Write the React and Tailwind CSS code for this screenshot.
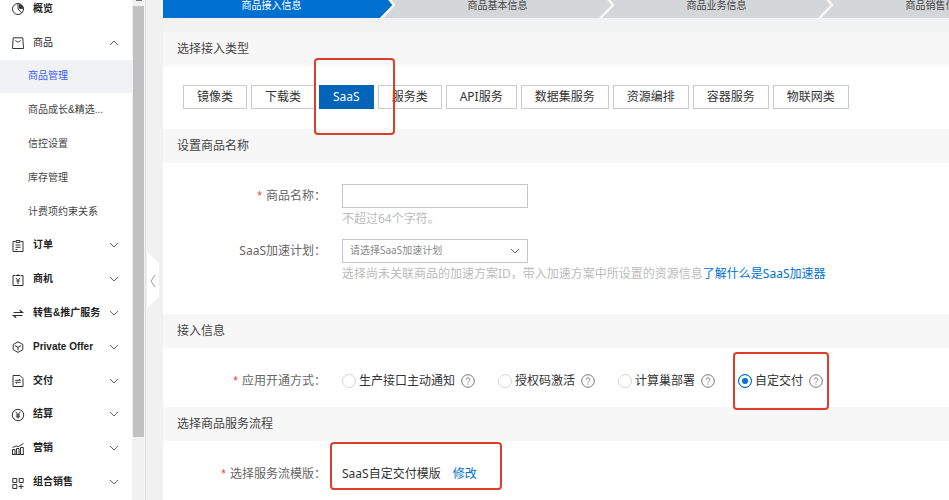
import { useState } from "react";

const iconPaths = {
  overview: (
    <>
      <circle cx="7" cy="7" r="5.5" />
      <path d="M7 1.5V7l4 3.8" />
      <path d="M8.5 2.5v3.8h3.6a5 5 0 0 0-3.6-3.8z" fill="currentColor" />
    </>
  ),
  goods: (
    <>
      <path d="M2.2 1.8h9.6l.7 10.7h-11z" />
      <path d="M4.6 4.2c.6 2.4 4.2 2.4 4.8 0" />
    </>
  ),
  order: (
    <>
      <path d="M4.5 2.5H2v10h10v-10H9.5" />
      <path d="M5 1.5h4v2H5zM4.5 6h5M4.5 8.3h5M4.5 10.5h2" />
    </>
  ),
  chance: (
    <>
      <path d="M4.5 2.5H2v10h10v-10H9.5M5 2.5h4M7 1v1.5" />
      <path d="M5 5l2 2.5L9 5M7 7.5V11M5.3 8h3.4" />
    </>
  ),
  resale: (
    <>
      <path d="M2.5 5.5h9L8.8 3.2" strokeWidth="1.2" />
      <path d="M11.5 8.5h-9l2.700 2.300" strokeWidth="1.2" />
    </>
  ),
  offer: (
    <>
      <path d="M7 1.8l4.8 2.700v5.200L7 12.400 2.200 9.700V4.500z" />
      <path d="M4 5.600L7 7.300l3-1.700M7 7.300v3" />
    </>
  ),
  delivery: (
    <>
      <path d="M2 1.5h7l3 3v8H2z" />
      <path d="M4.3 6.3h5.2L8 5M9.7 8.3H4.5L6 9.6" />
    </>
  ),
  settle: (
    <>
      <circle cx="7" cy="7" r="5.7" />
      <path d="M4.7 3.8L7 6.7l2.3-2.9M7 6.7v4M4.9 7h4.2M4.9 8.8h4.2" />
    </>
  ),
  marketing: (
    <>
      <path d="M1.5 7.5h2.500v5H1.5zM5.500 6.500H8v6H5.500zM9.500 5.500h2.800v7H9.500z" />
      <path d="M1 12.5h12M1.5 5.5L5 4l2.5.5 5-3" />
    </>
  ),
  bundle: (
    <>
      <path d="M1.8 2.5h4v4h-4zM8.2 2.5h4v4h-4zM1.8 8.5h4v4h-4z" />
      <path d="M10 8v5M7.5 10.5h5" />
    </>
  ),
};

const menu = [
  { icon: "overview", label: "概览", leaf: true },
  { icon: "goods", label: "商品", open: true },
  { sub: true, label: "商品管理", active: true },
  { sub: true, label: "商品成长&精选..." },
  { sub: true, label: "信控设置" },
  { sub: true, label: "库存管理" },
  { sub: true, label: "计费项约束关系" },
  { icon: "order", label: "订单" },
  { icon: "chance", label: "商机" },
  { icon: "resale", label: "转售&推广服务" },
  { icon: "offer", label: "Private Offer" },
  { icon: "delivery", label: "交付" },
  { icon: "settle", label: "结算" },
  { icon: "marketing", label: "营销" },
  { icon: "bundle", label: "组合销售" },
];

const steps = ["商品接入信息", "商品基本信息", "商品业务信息", "商品销售信息"];

const types = ["镜像类", "下载类", "SaaS", "服务类", "API服务", "数据集服务", "资源编排", "容器服务", "物联网类"];

const openModes = ["生产接口主动通知", "授权码激活", "计算巢部署", "自定交付"];

const Chevron = ({ up = false, className = "" }) => (
  <svg viewBox="0 0 10 6" className={`h-[6px] w-[10px] ${className}`} fill="none" stroke="currentColor" aria-hidden="true">
    <path d={up ? "M1 5l4-4 4 4" : "M1 1l4 4 4-4"} />
  </svg>
);

const MenuRow = ({ item }) => {
  if (item.sub) {
    return (
      <a
        href="#"
        className={`flex items-center pl-7 ${item.active ? "bg-[#f1f2f6] text-[#3b5bef]" : "text-[#444]"}`}
        aria-current={item.active ? "page" : undefined}
      >
        {item.label}
      </a>
    );
  }

  return (
    <button
      type="button"
      className="flex items-center pr-3 pl-[11px] text-left text-[#222]"
      aria-expanded={item.leaf ? undefined : !!item.open}
    >
      <svg viewBox="0 0 14 14" className="mt-px mr-2 size-[14px] text-[#333]" fill="none" stroke="currentColor" aria-hidden="true">
        {iconPaths[item.icon]}
      </svg>
      <span className={item.open ? "flex-1" : "flex-1 font-bold"}>{item.label}</span>
      {!item.leaf && <Chevron up={item.open} className="mr-px text-[#666]" />}
    </button>
  );
};

const Sidebar = () => (
  <aside className="flex shrink-0 overflow-hidden bg-white">
    <nav className="-mt-2 mb-px grid w-[132px] auto-rows-fr text-[10px] leading-4">
      {menu.map((item) => (
        <MenuRow key={item.label} item={item} />
      ))}
    </nav>
    <div className="w-[14px] border-r border-[#e2e2e2] bg-[#f1f1f1] px-px">
      <div className="mx-auto h-px w-[6px] bg-[#777]" />
      <div className="mt-[5px] h-[431px] bg-[#c1c1c1]" />
    </div>
  </aside>
);

const Steps = () => (
  <ol className="flex h-[18px] overflow-hidden bg-[#d3d7d9] text-[10px] leading-[10px]">
    {steps.map((step, i) => (
      <li key={step} className="flex shrink-0">
        <span
          className={`h-[18px] text-center ${i === 0 ? "w-[217px] bg-[#0070d0] text-white" : "w-[203px] text-[#444]"}`}
        >
          {step}
        </span>
        <svg viewBox="0 0 16 18" className="h-[18px] w-4" aria-hidden="true">
          {i === 0 && <path d="M0 0h9l4 5L0 18z" fill="#0070d0" />}
          <path d="M9 -1l5 6L1 18.5" fill="none" stroke="#f7f7f7" strokeWidth="2.5" />
        </svg>
      </li>
    ))}
  </ol>
);

const Section = ({ title, className = "", children }) => (
  <section>
    <h2 className="bg-[#f7f7f7] px-[14px] text-xs leading-[34px] text-[#444]">{title}</h2>
    <div className={`bg-white ${className}`}>{children}</div>
  </section>
);

const Label = ({ required, children, ...props }) => (
  <label className="w-[163px] shrink-0 text-right leading-6 text-[#666]" {...props}>
    {required && <span className="mr-1 font-['Liberation_Sans',sans-serif] text-[#e8432e]">*</span>}
    {children}：
  </label>
);

const HelpIcon = () => (
  <svg viewBox="0 0 14 14" className="size-[14px]" fill="none" stroke="#777" aria-hidden="true">
    <circle cx="7" cy="7" r="6.3" />
    <path d="M5.2 5.6c0-2.3 3.6-2.3 3.6 0C8.8 6.8 7 6.9 7 8.4M7 9.5v1.2" />
  </svg>
);

// red outline drawn over the part of the page it points to
const Mark = ({ className }) => (
  <span className={`pointer-events-none absolute z-10 rounded-[4px] border-2 border-[#dc3f29] ${className}`} />
);

const App = () => {
  const [type, setType] = useState("SaaS");
  const [mode, setMode] = useState("自定交付");

  return (
    <div
      lang="zh-CN"
      className="flex h-screen overflow-hidden bg-[#f1f1f1] font-['Liberation_Sans','Noto_Sans_CJK_SC',sans-serif]"
    >
      <Sidebar />
      <div className="relative w-[17px] shrink-0">
        <button type="button" aria-label="收起菜单" className="absolute top-[252px] left-px h-14 w-3">
          <svg viewBox="0 0 12 56" className="h-14 w-3" fill="none">
            <path d="M0 0l12 11v34L0 56z" fill="#fff" />
            <path d="M8 23l-4 6 4 6" stroke="#999" />
          </svg>
        </button>
      </div>

      <main className="min-w-0 flex-1 bg-white font-['Noto_Sans','Noto_Sans_CJK_SC',sans-serif] text-xs">
        <div className="bg-[#f2f2f2] pb-[14px]">
          <Steps />
        </div>

        <Section title="选择接入类型" className="flex gap-1 px-5 pt-[19px] pb-5">
          {types.map((t) => (
            <div key={t} className="relative shrink-0">
              <button
                type="button"
                aria-pressed={t === type}
                onClick={() => setType(t)}
                className={`block h-6 border px-[13px] leading-[22px] ${
                  t === type ? "border-[#0064b8] bg-[#0064b8] text-white" : "border-[#ccc] bg-white text-[#333]"
                }`}
              >
                {t}
              </button>
              {t === "SaaS" && <Mark className="-top-[27px] -right-[21px] -left-[5px] h-[77px]" />}
            </div>
          ))}
        </Section>

        <Section title="设置商品名称" className="pt-[21px] pb-[30px]">
          <div className="flex gap-4">
            <Label required htmlFor="name">商品名称</Label>
            <div>
              <input id="name" type="text" className="block h-6 w-[186px] border border-[#c4c6cf] px-2 outline-none" />
              <p className="pt-px leading-5 text-[#bbb]">不超过64个字符。</p>
            </div>
          </div>
          <div className="mt-[10px] flex gap-4">
            <Label htmlFor="plan">SaaS加速计划</Label>
            <div className="min-w-0">
              <div className="relative w-[186px]">
                <select
                  id="plan"
                  className="block h-6 w-full appearance-none border border-[#c4c6cf] bg-white px-[7px] text-[10px] text-[#888] outline-none"
                >
                  <option>请选择SaaS加速计划</option>
                </select>
                <Chevron className="pointer-events-none absolute top-[9px] right-2 text-[#666]" />
              </div>
              <p className="pt-px leading-5 whitespace-nowrap text-[#bbb]">
                选择尚未关联商品的加速方案ID，带入加速方案中所设置的资源信息
                <a href="#" className="text-[#0070cc]">了解什么是SaaS加速器</a>
              </p>
            </div>
          </div>
        </Section>

        <Section title="接入信息" className="pt-[21px] pb-[14px]">
          <div className="flex gap-4" role="radiogroup" aria-labelledby="mode-label">
            <Label required id="mode-label">应用开通方式</Label>
            <div className="flex gap-[23px]">
              {openModes.map((m) => (
                <div key={m} className="relative flex shrink-0 items-center gap-[6px]">
                  <label className="flex items-center gap-[3px] leading-6 text-[#333]">
                    <input
                      type="radio"
                      name="mode"
                      checked={m === mode}
                      onChange={() => setMode(m)}
                      className="size-[14px] appearance-none rounded-full border border-[#d5d5d5] bg-white checked:border-[#0070cc] checked:bg-[#0070cc] checked:shadow-[inset_0_0_0_3px_#fff]"
                    />
                    {m}
                  </label>
                  <HelpIcon />
                  {m === "自定交付" && <Mark className="-top-[17px] -right-[6px] -left-[5px] h-[58px]" />}
                </div>
              ))}
            </div>
          </div>
        </Section>

        <Section title="选择商品服务流程" className="pt-[21px]">
          <div className="flex gap-4">
            <Label required id="flow-label">选择服务流模版</Label>
            <div className="relative flex gap-3 leading-6 text-[#333]">
              <span aria-labelledby="flow-label">SaaS自定交付模版</span>
              <a href="#" className="text-[#0070cc]">修改</a>
              <Mark className="-top-5 -right-[25px] -left-3 h-12" />
            </div>
          </div>
        </Section>
      </main>
    </div>
  );
};

export default App;
